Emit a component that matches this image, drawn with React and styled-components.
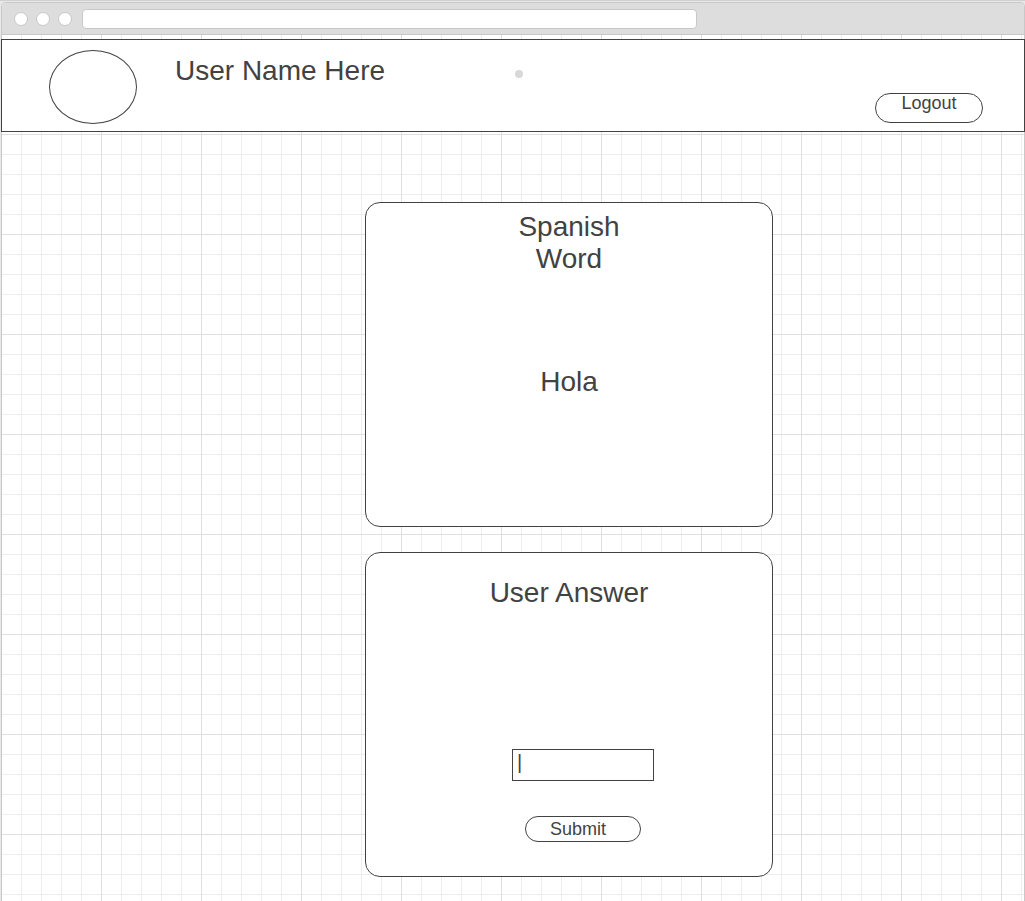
import React, { useState } from "react";
import styled, { createGlobalStyle } from "styled-components";

const ink = "#424242";
const edge = "#c8c8c8";
const minorLine = "#ededed";
const majorLine = "#dfdfdf";

const GlobalStyle = createGlobalStyle`
  *, *::before, *::after { box-sizing: border-box; }
  body {
    margin: 0;
    background: #e8e8e8;
    color: ${ink};
    font-family: "Liberation Sans", Arial, sans-serif;
  }
  button, input { font: inherit; color: inherit; }
`;

const Page = styled.div`
  display: flex;
  flex-direction: column;
  min-height: 100vh;
  border-top: 1px solid #d0d0d0;
  padding: 1px 0 0 1px;
`;

const Window = styled.div`
  flex: 1;
  border: 1px solid ${edge};
  border-bottom: 0;
  border-radius: 5px 5px 0 0;
  background-color: #fff;
  background-image:
    linear-gradient(to right, ${majorLine} 1px, transparent 1px),
    linear-gradient(to bottom, ${majorLine} 1px, transparent 1px),
    linear-gradient(to right, ${minorLine} 1px, transparent 1px),
    linear-gradient(to bottom, ${minorLine} 1px, transparent 1px);
  background-size: 100px 100px, 100px 100px, 20px 20px, 20px 20px;
  background-position: 0 0, 0 32px, 0 0, 0 12px;
  background-origin: border-box;
`;

const TitleBar = styled.div`
  display: flex;
  align-items: center;
  gap: 8px;
  height: 32px;
  padding: 0 12px;
  border-bottom: 1px solid ${edge};
  border-radius: 4px 4px 0 0;
  background: #ddd;
`;

const WindowDot = styled.span`
  width: 14px;
  height: 14px;
  border: 1px solid ${edge};
  border-radius: 50%;
  background: #fff;
`;

const AddressBar = styled.input`
  width: 60vw;
  height: 20px;
  margin-left: 2px;
  padding: 0 6px;
  border: 1px solid ${edge};
  border-radius: 4px;
  background: #fff;
  font-size: 14px;
  outline: none;
`;

const Header = styled.header`
  display: flex;
  align-items: flex-start;
  margin: 4px -1px 0;
  padding: 10px 41px 7px 47px;
  border: 1px solid ${ink};
  background: #fff;
`;

const Avatar = styled.div`
  width: 88px;
  height: 74px;
  margin-right: 38px;
  border: 1px solid ${ink};
  border-radius: 50%;
`;

const Heading = styled.h2`
  margin: 0;
  font-size: 28px;
  font-weight: 400;
  line-height: 32px;
  text-align: center;
`;

const UserName = styled(Heading).attrs({ as: "h1" })`
  min-width: 340px;
  margin-top: 5px;
  text-align: left;
`;

const Marker = styled.span`
  width: 8px;
  height: 8px;
  margin-top: 20px;
  border-radius: 50%;
  background: #d8d8d8;
`;

const PillButton = styled.button`
  display: flex;
  justify-content: center;
  padding: 0;
  border: 1px solid ${ink};
  border-radius: 15px;
  background: #fff;
  font-size: 18px;
  line-height: 18px;
  cursor: pointer;
`;

const LogoutButton = styled(PillButton)`
  align-items: flex-start;
  width: 108px;
  height: 30px;
  margin: 43px 0 0 auto;
`;

const SubmitButton = styled(PillButton)`
  align-items: center;
  width: 116px;
  height: 26px;
  padding-right: 10px;
`;

const Main = styled.main`
  display: flex;
  flex-direction: column;
  align-items: center;
  gap: 25px;
  padding: 70px 0 24px 112px;
`;

const Card = styled.section`
  display: flex;
  flex-direction: column;
  align-items: center;
  width: 408px;
  min-height: 325px;
  padding-top: ${(p) => p.$top}px;
  border: 1px solid ${ink};
  border-radius: 15px;
  background: #fff;
`;

const CardTitle = styled(Heading)`
  max-width: ${(p) => (p.$narrow ? "120px" : "none")};
`;

const Word = styled.p`
  margin: 91px 0 0;
  font-size: 28px;
  line-height: 32px;
`;

const AnswerForm = styled.form`
  display: flex;
  flex-direction: column;
  align-items: center;
  gap: 35px;
  margin-top: 140px;
  padding-left: 28px;
`;

const AnswerInput = styled.input`
  width: 142px;
  height: 32px;
  padding: 0 4px 6px;
  border: 1px solid ${ink};
  border-radius: 0;
  background: #fff;
  font-size: 20px;
  outline: none;
`;

export default function App() {
  const [answer, setAnswer] = useState("|");

  return (
    <>
      <GlobalStyle />
      <Page>
        <Window>
          <TitleBar>
            <WindowDot />
            <WindowDot />
            <WindowDot />
            <AddressBar type="text" aria-label="Address" />
          </TitleBar>
          <Header>
            <Avatar />
            <UserName>User Name Here</UserName>
            <Marker />
            <LogoutButton type="button">Logout</LogoutButton>
          </Header>
          <Main>
            <Card $top={8}>
              <CardTitle $narrow>Spanish Word</CardTitle>
              <Word>Hola</Word>
            </Card>
            <Card $top={24}>
              <CardTitle id="answer-title">User Answer</CardTitle>
              <AnswerForm onSubmit={(e) => e.preventDefault()}>
                <AnswerInput
                  type="text"
                  aria-labelledby="answer-title"
                  value={answer}
                  onChange={(e) => setAnswer(e.target.value)}
                />
                <SubmitButton type="submit">Submit</SubmitButton>
              </AnswerForm>
            </Card>
          </Main>
        </Window>
      </Page>
    </>
  );
}
